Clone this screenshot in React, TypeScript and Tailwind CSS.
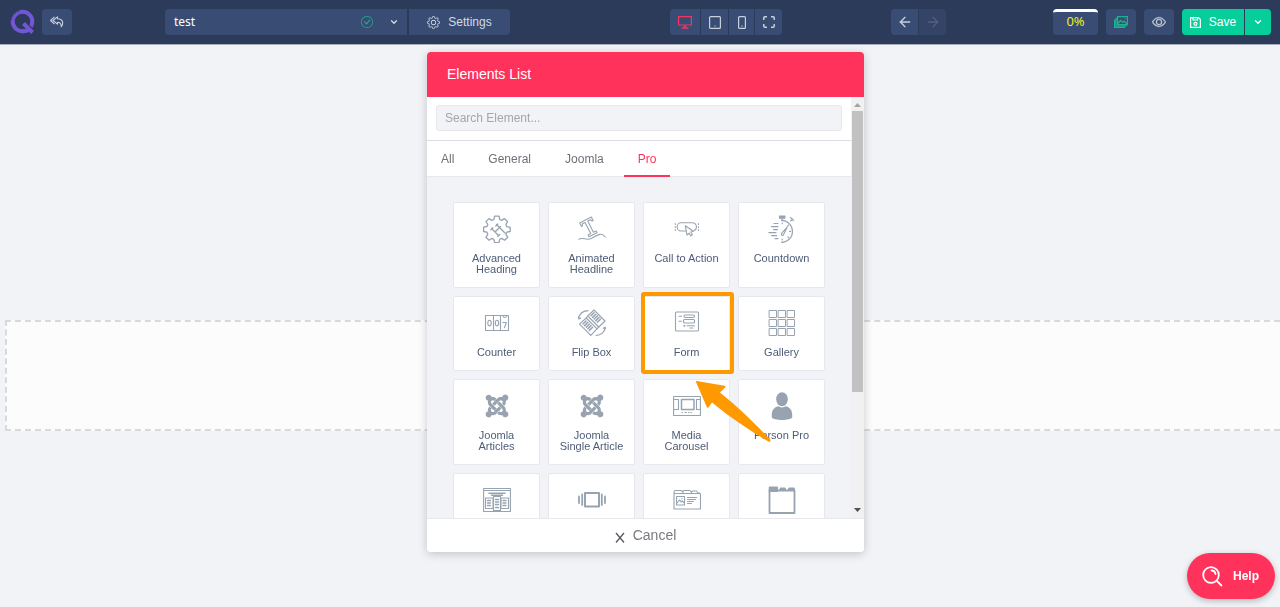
import { useState, type ReactNode } from "react";
import { FaJoomla } from "react-icons/fa";
import { FiArrowLeft, FiArrowRight, FiChevronDown } from "react-icons/fi";
import { BsCheckCircle, BsEye, BsGear } from "react-icons/bs";

type Element = {
  name: string;
  icon: ReactNode;
  highlighted?: boolean;
  iconOnly?: boolean;
};

const stroke = {
  width: 28,
  height: 28,
  viewBox: "0 0 28 28",
  fill: "none",
  stroke: "currentColor",
  strokeWidth: 1.1,
  strokeLinecap: "round",
  strokeLinejoin: "round",
  "aria-hidden": true,
} as const;

function HeadingIcon() {
  return (
    <svg {...stroke} strokeWidth={1.3}>
      <path d="M11.6 1.2h4.4l.7 3.3 2 .9 2.9-1.8 3 3.1-1.7 2.8.8 2.1 3.5.7v4.2l-3.4.7-.9 2.1 1.8 2.9-3.1 3-2.8-1.8-2.1.9-.7 3.4h-4.3l-.8-3.4-2-.9L6 25.200l-3-3 1.8-2.9-.9-2.1-3.300-.7v-4.300l3.300-.7.9-2-1.800-2.900 3-3 2.900 1.800 2-.9z" />
      <path d="m8.500 13.500 7 7M13.500 9.500l8.500 8.500M12 17l5.500-5.500M7.800 14.800l2-2M14.800 21.500l2-2M12.800 11l2-2" />
    </svg>
  );
}

function HeadlineIcon() {
  return (
    <svg {...stroke}>
      <path
        d="M-6.500 0H6.500v4h-1l-1-2H1.500v12.500H4.500v2h-9v-2h3V2h-3l-1 2h-1z"
        transform="translate(7.5 5) rotate(-27)"
      />
      <path d="M.8 24.200c4-2.600 7.500 1.800 12.500-.7 4.500-2.500 10.200-7.300 13.900-1.500" />
    </svg>
  );
}

function CallToActionIcon() {
  return (
    <svg {...stroke}>
      <path d="M12.500 16H8a3.800 3.800 0 0 1-3.800-3.800v-.6A3.800 3.800 0 0 1 8 7.800h11.600a3.800 3.800 0 0 1 3.800 3.800v.6c0 1.500-1 2.800-2.300 3.400" />
      <path d="m12.300 10.800 1.700 9.300 2-2 1.700 2.700 1.700-1.100-1.600-2.700 2.700-.7z" />
      <path d="M2.300 8.500v1M2.300 11.500v1M2.300 14.500v1M25.400 8.500v1M25.400 11.500v1M25.400 14.500v1" />
    </svg>
  );
}

function CountdownIcon() {
  return (
    <svg {...stroke}>
      <path d="M11.500 1h5.400v2.200h-5.400z" fill="currentColor" />
      <path d="M14.200 3.200v2.200M13.500 5.400a11 11 0 0 1 0 22M22.500 6l2-2M22.600 2.500l3 3" />
      <path d="M14.200 7.700v1M21.500 16.400h1.200M14.200 24v1M19.800 10.800l.8-.8M20 22l.8.8" />
      <path d="m13.800 18.200 5.600-6.400-3.700 7.400a1.200 1.200 0 1 1-1.900-1z" />
      <path d="M6 8.500h4M3.500 11.600H10M5.500 14.600h4M.8 17.600H8M3.500 20.600h5.300M7 23.600h3" />
    </svg>
  );
}

function CounterIcon() {
  return (
    <svg {...stroke}>
      <path d="M2.500 6.500h23v15h-23zM10.500 6.500v15M17.500 6.500v15" />
      <ellipse cx="6.500" cy="14" rx="1.700" ry="2.800" />
      <ellipse cx="14" cy="14" rx="1.700" ry="2.800" />
      <path d="M19.800 13.500h3.600l-2 5.200M20 7c.3 1.900 3.200 1.900 3.500 0" />
    </svg>
  );
}

function FlipBoxIcon() {
  return (
    <svg {...stroke}>
      <path d="m9.800 7 6.200-6 11 11-6.200 6zM8.200 9l10.800 10.800-6.200 6.500L1.500 15.200z" />
      <path d="m9.800 7-1.600 2M20.800 18l-1.800 1.800" />
      <path
        d="m13 6.800 3-3M14.600 8.400l3.200-3.200M16.200 10l3.200-3.200M17.800 11.600l3.200-3.200M19.400 13.200l3.200-3.200M5 15l3-3M6.600 16.600l3.200-3.200M8.200 18.200l3.200-3.200M9.800 19.800l3.200-3.200M11.400 21.400l3.200-3.200"
        strokeWidth={1.5}
      />
      <path d="M.8 9.500C1.200 4.800 5 2 10 1.600M.2 7.800l.6 2.200 2-1M18 26.500c5.200-.2 8.800-3.400 9-8M25.200 19.300l1.800-1.200.9 2" />
    </svg>
  );
}

function FormIcon() {
  return (
    <svg {...stroke}>
      <rect x="2.500" y="3" width="23" height="19" rx="1" />
      <rect x="11" y="6" width="10.500" height="2.500" rx="1.200" />
      <rect x="10.500" y="10.500" width="11" height="3.500" rx="1" />
      <path d="M6 7.200h2.500M6 12.200h2.500M14 16.800h7.500M17 19h3M11 16.500h.8v.8H11z" />
    </svg>
  );
}

function GalleryIcon() {
  const cells = [1.5, 10.5, 19.5];

  return (
    <svg {...stroke} strokeWidth={1}>
      {cells.map((y) =>
        cells.map((x) => (
          <rect key={`${x}-${y}`} x={x} y={y} width="7" height="7" />
        )),
      )}
    </svg>
  );
}

function MediaCarouselIcon() {
  return (
    <svg {...stroke}>
      <path d="M.6 4.500h26.800v19H.6zM1 7.500h4.500v10H1M27 7.500h-3.500v10H27" />
      <path d="M8.500 7.500h12.500v10H8.500z" strokeWidth={1.500} />
      <path d="M9 20.500h.5M12 20.500h1.500M15.500 20.500h.5M18 20.500h.5" />
    </svg>
  );
}

function PersonIcon() {
  return (
    <svg {...stroke} fill="currentColor" stroke="none">
      <ellipse cx="14" cy="7.300" rx="5.800" ry="7" />
      <path d="M3.800 25.500c-.5-7.300 2-10 6.400-11.200 2.300 1.500 5.300 1.500 7.600 0 4.400 1.200 6.900 3.900 6.400 11.200-1.400 3.300-19 3.300-20.400 0z" />
    </svg>
  );
}

function PriceTableIcon() {
  return (
    <svg {...stroke}>
      <path d="M.6 2.500h26.800v23H.6zM.6 4.500h26.800" />
      <path d="M6 7.200h16M8.500 9.200h11" strokeWidth={1.500} />
      <path d="M2.500 12h7.500v10.500H2.500zM18 12h7.500v10.500H18zM10.500 10.500h7v14h-7z" />
      <path d="M4.500 14.500h3M4.500 17h3M4.500 19.500h3M20 14.500h3M20 17h3M20 19.500h3M12.500 13.500h3M12.500 16h3M12.500 18.500h3M12.500 21.500h3" strokeWidth={1.400} />
    </svg>
  );
}

function SlidesIcon() {
  return (
    <svg {...stroke}>
      <rect x="7" y="7" width="14" height="13.500" strokeWidth={2} />
      <path d="M4.200 8.500v10.500M23.800 8.500v10.500M1 10.500v6.500M27 10.500v6.500" strokeWidth={1.800} />
    </svg>
  );
}

function PortfolioIcon() {
  return (
    <svg {...stroke}>
      <path d="M1 7.500V6l1-1.500h6.500l1.500 2V5l1-.5h6l1.500 2V6l1-1h4l1.500 2h1.500l1 1v15H1V7.500h9M2 7.500h25" />
      <path d="M3.500 10.500h8v8.500h-8zM4 17l2.500-3 2 2 1-1 2 2.500M8.800 12.800h.2M14.500 11.500h9M14.500 13.500h8M14.500 15.500h6M14.500 17.500h4" />
    </svg>
  );
}

function TabsIcon() {
  return (
    <svg {...stroke}>
      <rect x="1.500" y="4.500" width="25" height="22.500" strokeWidth={1.800} />
      <path
        d="M.7 6V1.500a1 1 0 0 1 1-1H9a1 1 0 0 1 1 1V6zM11.500 4V2.500l1-1h4.500l1 1V4zM20 4V2.500l1-1h5l1 1V4z"
        fill="currentColor"
        stroke="none"
      />
    </svg>
  );
}

const elements: Element[] = [
  { name: "Advanced Heading", icon: <HeadingIcon /> },
  { name: "Animated Headline", icon: <HeadlineIcon /> },
  { name: "Call to Action", icon: <CallToActionIcon /> },
  { name: "Countdown", icon: <CountdownIcon /> },
  { name: "Counter", icon: <CounterIcon /> },
  { name: "Flip Box", icon: <FlipBoxIcon /> },
  { name: "Form", icon: <FormIcon />, highlighted: true },
  { name: "Gallery", icon: <GalleryIcon /> },
  { name: "Joomla Articles", icon: <FaJoomla size={26} /> },
  { name: "Joomla Single Article", icon: <FaJoomla size={26} /> },
  { name: "Media Carousel", icon: <MediaCarouselIcon /> },
  { name: "Person Pro", icon: <PersonIcon /> },
  { name: "Price Table", icon: <PriceTableIcon />, iconOnly: true },
  { name: "Slides", icon: <SlidesIcon />, iconOnly: true },
  { name: "Portfolio", icon: <PortfolioIcon />, iconOnly: true },
  { name: "Tabs", icon: <TabsIcon />, iconOnly: true },
];

const tabs = ["All", "General", "Joomla", "Pro"];

const barButton =
  "flex h-[26px] items-center justify-center bg-[#394d74] text-[#c9d0dc]";

function Logo() {
  return (
    <svg width="26" height="26" viewBox="0 0 26 26" fill="none" aria-hidden>
      <circle cx="13.500" cy="12.500" r="9.800" stroke="#7356d6" strokeWidth="4" />
      <path d="m13.500 13.500 11 11" stroke="#2c3b5a" strokeWidth="6.500" />
      <path d="m14.500 14.500 9 9" stroke="#7356d6" strokeWidth="4" />
      <path d="M20 20.500c-2 1.500-4 2-6.500 1.800" stroke="#7356d6" strokeWidth="4" />
      <path
        d="M2 11a11.500 11.500 0 0 1 9-9.500"
        stroke="#2c3b5a"
        strokeWidth="2"
        strokeDasharray="1 1"
      />
    </svg>
  );
}

function TopBar() {
  return (
    <header className="flex h-[45px] items-center border-b border-[#a9afbd] bg-[#2c3b5a] px-[9px] text-xs text-[#d5dae3]">
      <Logo />
      <button
        aria-label="Back"
        className={`${barButton} ml-[7px] w-[30px] rounded`}
      >
        <svg width="14" height="12" viewBox="0 0 14 12" fill="none" stroke="currentColor" strokeWidth="1.100" strokeLinejoin="round" aria-hidden>
          <path d="M7.500.8 3 4.500l4.500 3.700V6.200c2.500 0 3.800.8 3.800 4.600 2.800-4.400 1.200-7.800-3.800-8zM4.500.8.6 4.500l3.900 3.700" />
        </svg>
      </button>

      <div className="ml-[93px] flex gap-0.5">
        <div className="flex h-[26px] w-[242px] items-center rounded-l bg-[#394d74] pr-2 pl-[9px]">
          <input
            aria-label="Page title"
            defaultValue="test"
            className="min-w-0 flex-1 bg-transparent font-['Noto_Sans',sans-serif] text-xs text-white outline-none"
          />
          <BsCheckCircle size={12} className="mr-4 text-[#1fb08f]" />
          <FiChevronDown size={10} strokeWidth={3} />
        </div>
        <button className={`${barButton} w-[101px] gap-2 rounded-r`}>
          <BsGear size={13} />
          <span className="text-[#d5dae3]">Settings</span>
        </button>
      </div>

      <div className="ml-40 flex gap-px overflow-hidden rounded">
        <button aria-label="Desktop" className={`${barButton} w-[30px]`}>
          <svg width="14" height="13" viewBox="0 0 14 13" fill="none" stroke="#f0375f" strokeWidth="1.200" aria-hidden>
            <path d="M.6.600h12.800v8.400H.6zM7 9v2.500M3.500 12.200h7M5.500 11h3" />
          </svg>
        </button>
        <button aria-label="Tablet" className={`${barButton} w-[27px]`}>
          <svg width="12" height="13" viewBox="0 0 12 13" fill="none" stroke="currentColor" strokeWidth="1.200" aria-hidden>
            <rect x=".6" y=".6" width="10.800" height="11.800" rx="1" />
            <path d="M5.500 10h1.200" />
          </svg>
        </button>
        <button aria-label="Phone" className={`${barButton} w-[25px]`}>
          <svg width="8" height="13" viewBox="0 0 8 13" fill="none" stroke="currentColor" strokeWidth="1.200" aria-hidden>
            <rect x=".6" y=".6" width="6.800" height="11.800" rx="1" />
            <path d="M3.400 10h1.200" />
          </svg>
        </button>
        <button aria-label="Full width" className={`${barButton} w-[27px]`}>
          <svg width="12" height="12" viewBox="0 0 12 12" fill="none" stroke="currentColor" strokeWidth="1.500" aria-hidden>
            <path d="M.8 4V1.800a1 1 0 0 1 1-1H4M8 .8h2.200a1 1 0 0 1 1 1V4M11.200 8v2.200a1 1 0 0 1-1 1H8M4 11.200H1.800a1 1 0 0 1-1-1V8" />
          </svg>
        </button>
      </div>

      <div className="ml-[109px] flex gap-px overflow-hidden rounded">
        <button aria-label="Undo" className={`${barButton} w-[27px]`}>
          <FiArrowLeft size={16} />
        </button>
        <button
          aria-label="Redo"
          disabled
          className="flex h-[26px] w-[27px] items-center justify-center bg-[#334467] text-[#53617f]"
        >
          <FiArrowRight size={16} />
        </button>
      </div>

      <div className="ml-auto flex gap-2">
        <button className="flex h-[26px] w-[45px] justify-center rounded border-t-3 border-white bg-[#394d74] font-['Noto_Sans',sans-serif] text-[13px] leading-[18px] text-[#f0ea24]">
          0%
        </button>
        <button aria-label="Media" className={`${barButton} w-[30px] rounded`}>
          <svg width="14" height="12" viewBox="0 0 14 12" fill="none" stroke="#1fb08f" strokeWidth="1.200" aria-hidden>
            <path d="M3.500.600h9.900v8h-9.900zM3.500 2.500H2v7.500h10V8.500M2 4H.6v7.400h9.900V10M4 7.500l2.500-3 2 2L10 5l3 3M10.500 2.500h1" />
          </svg>
        </button>
        <button aria-label="Preview" className={`${barButton} w-[30px] rounded`}>
          <BsEye size={14} strokeWidth={0.4} />
        </button>
        <div className="flex gap-px overflow-hidden rounded text-white">
          <button className="flex h-[26px] w-[62px] items-center justify-center gap-2 bg-[#06ce9b]">
            <svg width="11" height="11" viewBox="0 0 11 11" fill="none" stroke="currentColor" strokeWidth="1.200" aria-hidden>
              <path d="M.6.600h7.900l1.900 1.900v7.900H.6zM3 .6v2.400h4.500V.6" />
              <circle cx="5.500" cy="6.800" r="1.500" />
            </svg>
            Save
          </button>
          <button
            aria-label="Save options"
            className="flex h-[26px] w-[26px] items-center justify-center bg-[#06ce9b]"
          >
            <FiChevronDown size={10} strokeWidth={3} />
          </button>
        </div>
      </div>
    </header>
  );
}

function Pointer() {
  return (
    <svg
      width="80"
      height="64"
      viewBox="0 0 80 64"
      className="absolute top-[83px] left-[50px] z-10"
      aria-hidden
    >
      <path
        d="M2.800 1 30.500 5.800c1.200.3 1.400 1 .6 1.800L26 12.500c18 14.500 34 30 50.200 47 1 1.300-.5 3-1.900 2.100C56 50.500 36 37.500 18 22.500l-3.400 4.800c-.5.800-1.400.7-1.700-.1L2 2c-.2-.7.1-1.100.8-1z"
        fill="#ff9900"
      />
    </svg>
  );
}

function ElementCard({ name, icon, highlighted, iconOnly }: Element) {
  return (
    <button
      aria-label={name}
      className="relative flex min-h-[75px] flex-col items-center rounded-xs border border-[#e6e8ed] bg-white px-1 py-3"
    >
      <span className="flex size-7 items-center justify-center text-[#98a3b1]">
        {icon}
      </span>
      {!iconOnly && (
        <span
          className={`mt-2.5 text-[11px] leading-[11px] text-[#4e5c78] ${
            name === "Call to Action" ? "" : "px-2"
          }`}
        >
          {name.startsWith("Joomla ") ? (
            <>
              Joomla
              <span className="-mx-2 block">{name.slice(7)}</span>
            </>
          ) : (
            name
          )}
        </span>
      )}
      {highlighted && (
        <>
          <span className="absolute -top-[5px] -right-[5px] -bottom-1 -left-[3px] rounded-[3px] border-4 border-[#ff9900]" />
          <Pointer />
        </>
      )}
    </button>
  );
}

function Scrollbar() {
  return (
    <div
      className="flex w-[13px] shrink-0 flex-col items-center bg-[#f1f1f1]"
      aria-hidden
    >
      <svg width="7" height="14" viewBox="0 0 7 14">
        <path d="M0 10h7L3.500 6z" fill="#a3a3a3" />
      </svg>
      <div className="h-[281px] w-[11px] bg-[#c1c1c1]" />
      <svg width="7" height="16" viewBox="0 0 7 16" className="mt-auto">
        <path d="M0 6h7l-3.500 4z" fill="#505050" />
      </svg>
    </div>
  );
}

function ElementsPanel() {
  const [active, setActive] = useState("Pro");
  const [query, setQuery] = useState("");

  return (
    <section className="fixed top-13 bottom-[55px] left-[427px] flex w-[437px] flex-col overflow-hidden rounded bg-white shadow-[0_2px_10px_rgba(0,0,0,0.2)]">
      <h2 className="flex h-[45px] shrink-0 items-center bg-[#ff325c] px-5 pb-0.5 text-sm text-white">
        Elements List
      </h2>

      <div className="flex min-h-0 flex-1">
        <div className="flex-1 overflow-hidden bg-[#f2f3f7]">
          <div className="border-b border-[#dcdee3] bg-white px-[9px] pt-2 pb-[9px]">
            <input
              type="search"
              aria-label="Search elements"
              placeholder="Search Element..."
              value={query}
              onChange={(e) => setQuery(e.target.value)}
              className="block h-[26px] w-full rounded-[3px] border border-[#e6e8ed] bg-[#f2f3f7] px-2 text-xs text-[#4e5c78] outline-none placeholder:text-[#a4a6aa]"
            />
          </div>

          <div
            role="tablist"
            className="flex gap-1.5 border-b border-[#e6e8ed] bg-white text-xs"
          >
            {tabs.map((tab) => (
              <button
                key={tab}
                role="tab"
                aria-selected={tab === active}
                onClick={() => setActive(tab)}
                className={`-mb-px h-9 border-b-2 px-3.5 pt-0.5 ${
                  tab === active
                    ? "border-[#ff325c] text-[#ff325c]"
                    : "border-transparent text-[#6d7078]"
                }`}
              >
                {tab}
              </button>
            ))}
          </div>

          <div className="grid grid-cols-4 gap-2 px-[26px] pt-[25px]">
            {elements.map((element) => (
              <ElementCard key={element.name} {...element} />
            ))}
          </div>
        </div>
        <Scrollbar />
      </div>

      <button className="z-10 flex h-[34px] shrink-0 items-center justify-center gap-2 border-t border-[#e6e8ed] bg-white pb-0.5 text-sm text-[#777a80]">
        <svg width="10" height="18" viewBox="0 0 10 18" stroke="#555960" strokeWidth="1.300" aria-hidden>
          <path d="m1 7 8 9.500M9 7l-8 9.500" />
        </svg>
        Cancel
      </button>
    </section>
  );
}

export default function App() {
  return (
    <div className="min-h-screen bg-[#f2f3f7] font-['Liberation_Sans',Arial,sans-serif]">
      <TopBar />
      <main className="pt-[275px] pl-[5px]">
        <div className="h-[111px] border-2 border-r-0 border-dashed border-[#d7d9de] bg-[#fcfcfd]" />
      </main>
      <ElementsPanel />
      <button className="fixed right-[5px] bottom-2 flex h-[46px] w-[88px] items-center gap-2.5 rounded-full bg-[#ff325c] pl-[15px] text-xs font-bold text-white shadow-[0_2px_6px_rgba(0,0,0,0.25)]">
        <svg width="21" height="21" viewBox="0 0 21 21" fill="none" stroke="currentColor" strokeWidth="1.800" strokeLinecap="round" aria-hidden>
          <circle cx="9" cy="9" r="7.800" />
          <path d="m14.800 14.800 4.700 4.700M9.500 4.500c2 0 3.700 1.500 4 3.500" />
        </svg>
        Help
      </button>
    </div>
  );
}
